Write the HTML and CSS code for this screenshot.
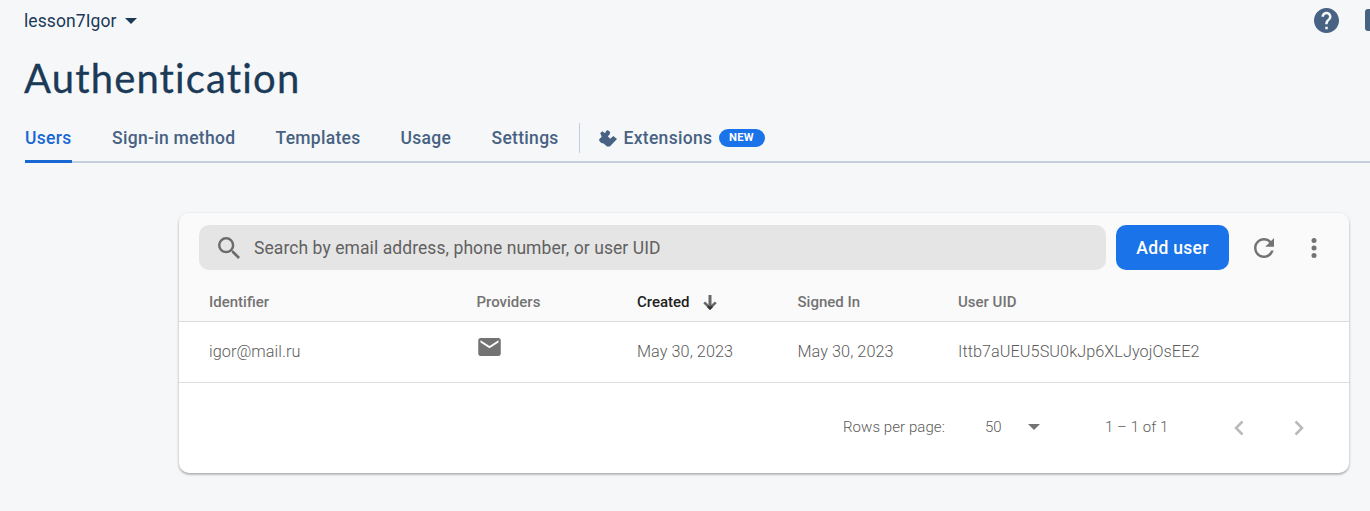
FILE: index.html
```html
<!DOCTYPE html>
<html lang="en">
<head>
<meta charset="utf-8">
<title>Authentication</title>
<link rel="stylesheet" href="styles.css">
</head>
<body>
<header class="topbar">
  <div class="project"><span class="project-name">lesson7Igor</span><svg class="caret" viewBox="0 0 12 6"><path d="M0 0h12L6 6z"/></svg></div>
  <div class="top-actions">
    <svg class="help" viewBox="2 2 20 20"><path d="M12 2C6.48 2 2 6.48 2 12s4.480 10 10 10 10-4.480 10-10S17.520 2 12 2zm1 17h-2v-2h2v2zm2.070-7.750l-.9.920C13.450 12.900 13 13.500 13 15h-2v-.5c0-1.100.45-2.100 1.170-2.830l1.240-1.260c.37-.36.59-.86.59-1.410 0-1.100-.9-2-2-2s-2 .9-2 2H8c0-2.210 1.790-4 4-4s4 1.790 4 4c0 .88-.36 1.680-.93 2.250z"/></svg>
    <span class="docs"></span>
  </div>
</header>
<h1 class="title">Authentication</h1>
<nav class="tabs">
  <a class="tab active">Users</a>
  <a class="tab signin">Sign-in method</a>
  <a class="tab templates">Templates</a>
  <a class="tab usage">Usage</a>
  <a class="tab settings">Settings</a>
  <span class="divider"></span>
  <a class="tab extensions"><svg class="puzzle" viewBox="0 0 18 17"><path d="M1.200 3L3.500 1.200 5.200 2.800 6.600 2.800 6.900 1.200 8.800.1 11.300 2.300 10.400 4.800 8.800 6.200 11.200 8.700 14.300 6 18 9 10.800 16.500H8L4.600 13.400 2.300 13 .3 11 .2 9.200 2.700 6.800z"/></svg><span class="ext-text">Extensions</span><span class="badge">NEW</span></a>
</nav>
<main class="card">
  <div class="card-head">
    <div class="toolbar">
      <div class="search"><svg class="search-icon" viewBox="3 3 17.500 17.500"><path d="M15.500 14h-.79l-.28-.27A6.471 6.471 0 0 0 16 9.500 6.500 6.500 0 1 0 9.500 16c1.610 0 3.090-.59 4.230-1.570l.27.28v.79l5 4.990L20.490 19l-4.990-5zm-6 0C7.010 14 5 11.990 5 9.500S7.010 5 9.500 5 14 7.010 14 9.500 11.990 14 9.500 14z"/></svg><span class="search-text">Search by email address, phone number, or user UID</span></div>
      <button class="add"><span>Add user</span></button>
      <svg class="refresh" viewBox="4 4 16 16"><path d="M17.650 6.350C16.200 4.900 14.210 4 12 4c-4.420 0-7.990 3.580-7.990 8s3.570 8 7.990 8c3.730 0 6.840-2.550 7.730-6h-2.080c-.82 2.330-3.040 4-5.650 4-3.310 0-6-2.690-6-6s2.690-6 6-6c1.660 0 3.140.69 4.220 1.780L13 11h7V4l-2.350 2.350z"/></svg>
      <svg class="more" viewBox="0 0 6 20"><circle cx="3" cy="2.500" r="2.500"/><circle cx="3" cy="10" r="2.500"/><circle cx="3" cy="17.500" r="2.500"/></svg>
    </div>
    <div class="grid labels">
      <span>Identifier</span><span>Providers</span><span class="sorted">Created<svg class="arrow" viewBox="0 0 14 15"><path d="M5.500 0h3v13h-3z"/><path d="M.3 8.300L2.100 6.500 7 11l4.900-4.500 1.800 1.800L7 15z"/><path class="arrow-tip" d="M5.500 10.500L7 12l1.500-1.500L10 12l-3 3-3-3z"/></svg></span><span>Signed In</span><span>User UID</span>
    </div>
  </div>
  <div class="grid row">
    <span class="email">igor@mail.ru</span><span><svg class="mail" viewBox="2 4 20 16"><path d="M20 4H4c-1.100 0-1.990.9-1.990 2L2 18c0 1.100.9 2 2 2h16c1.100 0 2-.9 2-2V6c0-1.100-.9-2-2-2zm0 4l-8 5-8-5V6l8 5 8-5v2z"/></svg></span><span>May 30, 2023</span><span>May 30, 2023</span><span class="uid">Ittb7aUEU5SU0kJp6XLJyojOsEE2</span>
  </div>
  <footer class="pager">
    <span class="rows-label">Rows per page:</span>
    <span class="size">50</span>
    <svg class="caret size-caret" viewBox="0 0 12 6"><path d="M0 0h12L6 6z"/></svg>
    <span class="range">1 – 1 of 1</span>
    <svg class="chevron" viewBox="0 0 10 16"><path d="M8.500 1.500L2 8l6.500 6.500"/></svg>
    <svg class="chevron next" viewBox="0 0 10 16"><path d="M1.500 1.500L8 8l-6.500 6.500"/></svg>
  </footer>
</main>
</body>
</html>
```

FILE: styles.css
```css
* { box-sizing: border-box; }
body { margin: 0; height: 511px; overflow: hidden; background: #f6f7f9; font-family: Roboto, sans-serif; color: #737373; }
svg { display: block; flex: none; fill: currentColor; }
span { white-space: nowrap; }
.topbar { height: 40px; display: flex; justify-content: space-between; padding-left: 24px; color: #1b3a57; }
.project { display: flex; align-items: center; gap: 9px; font-size: 17.5px; letter-spacing: 0.08px; height: 41px; }
.caret { width: 12px; height: 6px; }
.top-actions { display: flex; align-items: center; gap: 26px; height: 40px; color: #476282; }
.help { width: 25px; height: 25px; }
.docs { width: 5px; height: 22px; background: #476282; border-radius: 3px 0 0 3px; }
.title { margin: 0; padding-left: 24px; height: 73px; line-height: 77px; font-family: Lato, sans-serif; font-size: 40px; font-weight: 400; letter-spacing: 1.15px; color: #1b3a57; -webkit-text-stroke: 0.3px #1b3a57; }
.tabs { height: 50px; display: flex; margin-left: 25px; border-bottom: 2px solid #c3cfdd; color: #476282; font-size: 17.5px; font-weight: 500; letter-spacing: 0.3px; }
.tab { height: 50px; line-height: 50px; flex: none; white-space: nowrap; }
.active { color: #1967d2; width: 47px; margin-right: 40px; border-bottom: 3px solid #1967d2; border-radius: 2px 2px 0 0; }
.signin { width: 163.500px; }
.templates { width: 125px; }
.usage { width: 91px; }
.settings { width: 87.500px; }
.divider { width: 1px; height: 30px; margin: 10px 19px 0 0; background: #c3cfdd; }
.extensions { display: flex; align-items: center; }
.puzzle { width: 18px; height: 17px; margin-right: 6.500px; }
.ext-text { width: 89px; }
.badge { height: 18px; width: 46px; margin-left: 6px; border-radius: 9px; background: #1a73e8; color: #fff; font-size: 11.250px; line-height: 18px; font-weight: 700; text-align: center; letter-spacing: 0.3px; }
.card { margin: 50px 21px 0 179px; height: 260px; border-radius: 10px; background: #fff; overflow: hidden; box-shadow: 0 1px 3px rgba(0,0,0,.25), 0 2px 2px rgba(0,0,0,.12); }
.card-head { height: 109px; background: #fafafa; border-bottom: 1px solid #dcdcdc; padding-top: 12px; }
.toolbar { display: flex; align-items: center; padding: 0 32px 0 20px; height: 45px; }
.search { width: 907px; height: 45px; border-radius: 10px; background: #e5e5e5; display: flex; align-items: center; padding-left: 19px; gap: 14px; font-size: 17.5px; letter-spacing: 0.075px; color: #616161; }
.search-icon { width: 22px; height: 22px; color: #6b6b6b; }
.add { width: 113px; height: 45px; margin-left: 10px; padding: 0; border: 0; border-radius: 10px; background: #1a73e8; color: #fff; font: 500 17.5px Roboto, sans-serif; letter-spacing: 0.3px; }
.refresh { width: 20px; height: 20px; margin-left: 25px; }
.more { width: 6px; height: 20px; margin-left: 37px; }
.grid { display: grid; grid-template-columns: 267.500px 160.500px 160.500px 160.500px 1fr; padding-left: 30px; align-items: center; }
.labels { height: 51px; padding-top: 13px; font-size: 15px; font-weight: 500; }
.sorted { color: #212121; display: flex; align-items: center; gap: 13px; }
.arrow { width: 14px; height: 15px; color: #686868; }
.arrow-tip { fill: #333; }
.row { height: 61px; padding-bottom: 2px; border-bottom: 1px solid #dcdcdc; font-size: 16.250px; font-weight: 300; letter-spacing: 0.05px; color: #5c5c5c; }
.mail { width: 23px; height: 18px; margin: -9px 0 0 1px; color: #737373; }
.pager { height: 90px; display: flex; align-items: center; justify-content: flex-end; padding: 0 45px 2px 0; font-size: 15px; font-weight: 300; color: #5c5c5c; }
.rows-label { width: 142px; letter-spacing: 0.07px; }
.size { width: 43px; }
.size-caret { color: #737373; margin-right: 65px; }
.range { width: 129px; letter-spacing: 0.07px; }
.chevron { width: 10px; height: 16px; margin-top: 2px; fill: none; stroke: #bababa; stroke-width: 2.500; }
.next { margin-left: 50px; }
```
